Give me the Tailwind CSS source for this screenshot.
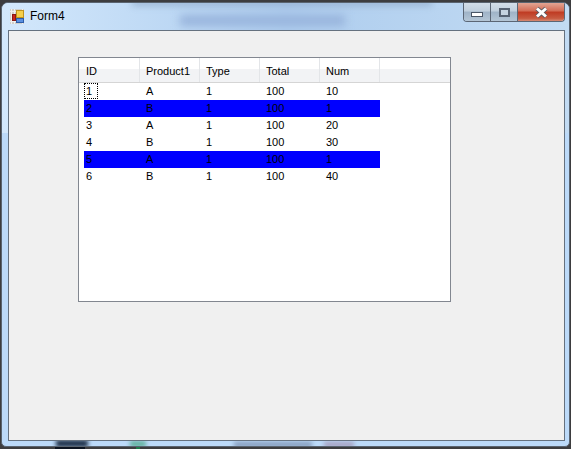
<!DOCTYPE html>
<html>
<head>
<meta charset="utf-8">
<script src="https://cdn.jsdelivr.net/npm/@tailwindcss/browser@4"></script>
</head>
<body class="relative m-0 bg-[#3d3d3f] w-[571px] h-[449px] overflow-hidden font-['Liberation_Sans',sans-serif] text-[11px] text-black">
<div class="absolute left-[55px] bottom-0 w-[30px] h-[2px] bg-[#0c1420]"></div>
<div class="absolute left-[136px] bottom-0 w-[4px] h-[2px] bg-[#1f7a4a]"></div>
<div class="relative mt-[2px] ml-[1px] w-[569px] h-[445px] rounded-t-[7px] rounded-b-[5px] overflow-hidden border border-[#5a6470] bg-[#bcdaf9] flex flex-col">
  <!-- blurred glass -->
  <div class="absolute left-0 top-0 w-full h-[130px] bg-gradient-to-r from-[#d3e8fc] via-[#aecdee] to-[#c2dbf3]"></div>
  <div class="absolute left-[130px] top-[-3px] w-[300px] h-[6px] bg-[#8ea8c8]/70 blur-[3px]"></div>
  <div class="absolute left-[178px] top-[12px] w-[165px] h-[11px] bg-[#98b4dc] blur-[4px]"></div>
  <div class="absolute left-[54px] bottom-[-1px] w-[32px] h-[7px] bg-[#1a2c44] blur-[2px]"></div>
  <div class="absolute left-[128px] bottom-[-1px] w-[16px] h-[6px] bg-[#5fb09c] blur-[2px]"></div>
  <div class="absolute left-[232px] bottom-[-1px] w-[78px] h-[5px] bg-[#8198b8] blur-[2px]"></div>
  <div class="absolute left-[322px] bottom-[-1px] w-[30px] h-[5px] bg-[#a39cbc] blur-[2px]"></div>

  <!-- title bar -->
  <div class="relative h-[27px] shrink-0 flex items-start justify-between">
    <div class="flex items-center gap-[6px] pl-[8px] pt-[6px]">
      <svg class="w-[14px] h-[15px]" viewBox="0 0 14 15">
        <rect x="0" y="0" width="14" height="15" fill="#cfcfcc"/>
        <path d="M1.500 0v15M4.500 0v15M12.500 0v15M0 2.500h14M0 12.500h14" stroke="#f0f0ee" stroke-width="1"/>
        <rect x="6.500" y="1.500" width="7" height="7" fill="#f5cf4a" stroke="#c0921c" stroke-width="1"/>
        <rect x="2.500" y="5.500" width="3" height="6" fill="#c8241c" stroke="#8a1a14" stroke-width="1"/>
        <rect x="6.500" y="9.500" width="7" height="4" fill="#5a90e0" stroke="#2c5ca8" stroke-width="1"/>
      </svg>
      <span class="text-[12px] leading-[15px]">Form4</span>
    </div>
    <div class="flex h-[19px] mr-[4px] border border-t-0 border-[#5b6675] rounded-b-[4px] overflow-hidden">
      <div class="w-[27px] flex items-center justify-center border-r border-[#5b6675] bg-[linear-gradient(#d3dee9_0,#c0cfdd_45%,#9fb3c7_50%,#b4c6d6_100%)]">
        <div class="w-[12px] h-[5px] mt-[5px] bg-white border border-[#4a5666]"></div>
      </div>
      <div class="w-[27px] flex items-center justify-center border-r border-[#5b6675] bg-[linear-gradient(#d3dee9_0,#c0cfdd_45%,#9fb3c7_50%,#b4c6d6_100%)]">
        <div class="w-[11px] h-[9px] border-2 border-[#566272] bg-[#c5d3e0]"></div>
      </div>
      <div class="w-[46px] flex items-center justify-center bg-[linear-gradient(#e2a594_0,#d26a53_45%,#bf3a22_50%,#c75a40_85%,#d68a74_100%)]">
        <svg class="w-[15px] h-[13px]" viewBox="0 0 15 13"><path d="M3 2.500l4.500 4 4.500-4M3 10.500l4.500-4 4.500 4" fill="none" stroke="#5a5a62" stroke-width="4.600"/><path d="M3 2.500l4.500 4 4.500-4M3 10.500l4.500-4 4.500 4" fill="none" stroke="#fff" stroke-width="3"/></svg>
      </div>
    </div>
  </div>

  <!-- client area -->
  <div class="relative mb-[5px] ml-[6px] mr-[4px] flex-1 border border-[#65717f] bg-[#f0f0f0] pl-[69px] pt-[26px]">
    <div class="w-[373px] h-[245px] border border-[#828790] bg-white">
      <div class="flex h-[25px] border-b border-[#d5d5d5] bg-[linear-gradient(#ffffff_0,#ffffff_45%,#f2f3f5_45%,#f2f3f5_100%)]">
        <div class="w-[61px] pl-[7px] leading-[26px] border-r border-[#e3e5e8]">ID</div>
        <div class="w-[60px] pl-[6px] leading-[26px] border-r border-[#e3e5e8]">Product1</div>
        <div class="w-[60px] pl-[6px] leading-[26px] border-r border-[#e3e5e8]">Type</div>
        <div class="w-[60px] pl-[6px] leading-[26px] border-r border-[#e3e5e8]">Total</div>
        <div class="w-[60px] pl-[6px] leading-[26px] border-r border-[#e3e5e8]">Num</div>
      </div>
      <div class="ml-[5px] w-[296px] leading-[17px]">
        <div class="grid grid-cols-[56px_60px_60px_60px_60px] h-[17px]"><div class="pl-[2px] relative">1<span class="absolute left-[0px] top-[0px] w-[14px] h-[16px] border border-dotted border-black"></span></div><div class="pl-[6px]">A</div><div class="pl-[6px]">1</div><div class="pl-[6px]">100</div><div class="pl-[6px]">10</div></div>
        <div class="grid grid-cols-[56px_60px_60px_60px_60px] h-[17px] bg-[#0000ff]"><div class="pl-[2px]">2</div><div class="pl-[6px]">B</div><div class="pl-[6px]">1</div><div class="pl-[6px]">100</div><div class="pl-[6px]">1</div></div>
        <div class="grid grid-cols-[56px_60px_60px_60px_60px] h-[17px]"><div class="pl-[2px]">3</div><div class="pl-[6px]">A</div><div class="pl-[6px]">1</div><div class="pl-[6px]">100</div><div class="pl-[6px]">20</div></div>
        <div class="grid grid-cols-[56px_60px_60px_60px_60px] h-[17px]"><div class="pl-[2px]">4</div><div class="pl-[6px]">B</div><div class="pl-[6px]">1</div><div class="pl-[6px]">100</div><div class="pl-[6px]">30</div></div>
        <div class="grid grid-cols-[56px_60px_60px_60px_60px] h-[17px] bg-[#0000ff]"><div class="pl-[2px]">5</div><div class="pl-[6px]">A</div><div class="pl-[6px]">1</div><div class="pl-[6px]">100</div><div class="pl-[6px]">1</div></div>
        <div class="grid grid-cols-[56px_60px_60px_60px_60px] h-[17px]"><div class="pl-[2px]">6</div><div class="pl-[6px]">B</div><div class="pl-[6px]">1</div><div class="pl-[6px]">100</div><div class="pl-[6px]">40</div></div>
      </div>
    </div>
  </div>
</div>
</body>
</html>
